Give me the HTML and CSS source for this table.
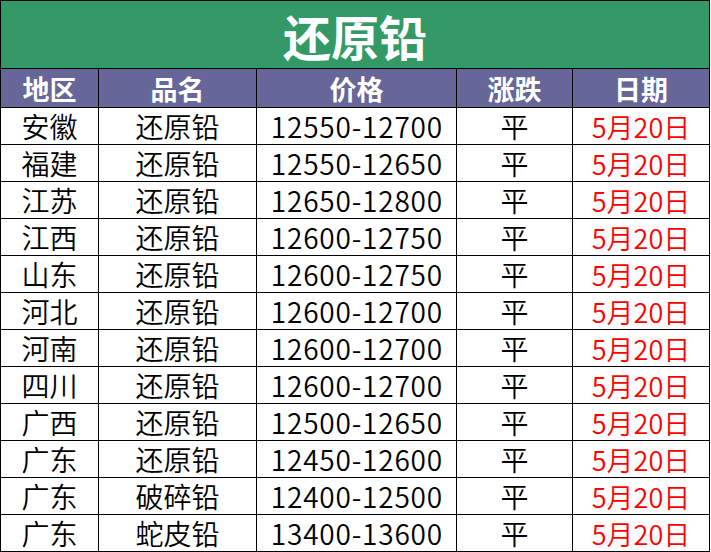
FILE: index.html
```html
<!DOCTYPE html>
<html lang="zh-CN">
<head>
<meta charset="utf-8">
<title>还原铅</title>
<link rel="stylesheet" href="styles.css">
</head>
<body>
<div class="sheet">
  <div class="title">还原铅</div>
  <div class="cell head">地区</div>
  <div class="cell head">品名</div>
  <div class="cell head">价格</div>
  <div class="cell head">涨跌</div>
  <div class="cell head">日期</div>

  <div class="cell">安徽</div><div class="cell">还原铅</div><div class="cell num">12550-12700</div><div class="cell">平</div><div class="cell date">5月20日</div>
  <div class="cell">福建</div><div class="cell">还原铅</div><div class="cell num">12550-12650</div><div class="cell">平</div><div class="cell date">5月20日</div>
  <div class="cell">江苏</div><div class="cell">还原铅</div><div class="cell num">12650-12800</div><div class="cell">平</div><div class="cell date">5月20日</div>
  <div class="cell">江西</div><div class="cell">还原铅</div><div class="cell num">12600-12750</div><div class="cell">平</div><div class="cell date">5月20日</div>
  <div class="cell">山东</div><div class="cell">还原铅</div><div class="cell num">12600-12750</div><div class="cell">平</div><div class="cell date">5月20日</div>
  <div class="cell">河北</div><div class="cell">还原铅</div><div class="cell num">12600-12700</div><div class="cell">平</div><div class="cell date">5月20日</div>
  <div class="cell">河南</div><div class="cell">还原铅</div><div class="cell num">12600-12700</div><div class="cell">平</div><div class="cell date">5月20日</div>
  <div class="cell">四川</div><div class="cell">还原铅</div><div class="cell num">12600-12700</div><div class="cell">平</div><div class="cell date">5月20日</div>
  <div class="cell">广西</div><div class="cell">还原铅</div><div class="cell num">12500-12650</div><div class="cell">平</div><div class="cell date">5月20日</div>
  <div class="cell">广东</div><div class="cell">还原铅</div><div class="cell num">12450-12600</div><div class="cell">平</div><div class="cell date">5月20日</div>
  <div class="cell">广东</div><div class="cell">破碎铅</div><div class="cell num">12400-12500</div><div class="cell">平</div><div class="cell date">5月20日</div>
  <div class="cell">广东</div><div class="cell">蛇皮铅</div><div class="cell num">13400-13600</div><div class="cell">平</div><div class="cell date">5月20日</div>
</div>
</body>
</html>
```

FILE: styles.css
```css
html, body {
  margin: 0;
  padding: 0;
  background: #ffffff;
}

.sheet {
  width: 710px;
  box-sizing: border-box;
  border-left: 1px solid #000;
  border-top: 1px solid #000;
  display: grid;
  grid-template-columns: 98px 158px 200px 116px 137px;
  grid-template-rows: 68px 39px repeat(12, 37px);
  font-family: "Noto Sans CJK SC", "Noto Sans", sans-serif;
  color: #000;
}

.title {
  grid-column: 1 / -1;
  background: #339966;
  color: #fff;
  font-weight: 700;
  font-size: 48px;
  display: flex;
  align-items: center;
  justify-content: center;
  border-right: 1px solid #000;
  border-bottom: 1px solid #000;
}

.cell {
  border-right: 1px solid #000;
  border-bottom: 1px solid #000;
  display: flex;
  align-items: center;
  justify-content: center;
  font-size: 28px;
  font-weight: 350;
  line-height: 1;
  white-space: nowrap;
}

.head {
  background: #666699;
  color: #fff;
  font-weight: 700;
  font-size: 27px;
}

.num {
  letter-spacing: 0.8px;
  text-indent: 0.8px;
}

.date {
  color: #ff0000;
  font-size: 27px;
}
```
